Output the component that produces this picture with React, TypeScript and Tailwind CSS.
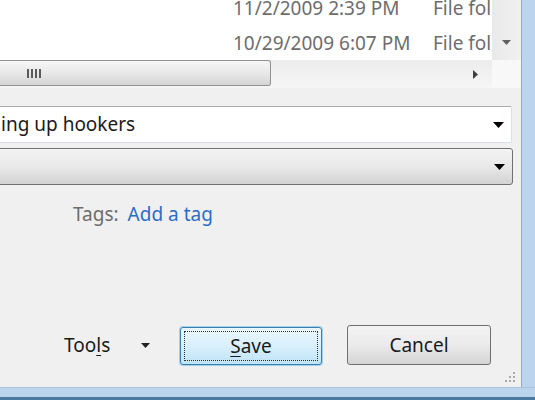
import React from "react";

function Tri({ className = "", fill = "#000", w = 11, h = 6 }: { className?: string; fill?: string; w?: number; h?: number }) {
  return (
    <svg width={w} height={h} viewBox={`0 0 ${w} ${h}`} className={className}>
      <polygon points={`0,0 ${w},0 ${w / 2},${h}`} fill={fill} />
    </svg>
  );
}

function Row({ date }: { date: string }) {
  return (
    <div className="h-[35px] flex items-center whitespace-nowrap leading-none">
      <div className="w-[433px] pl-[233px] shrink-0">{date}</div>
      <div className="shrink-0">File folder</div>
    </div>
  );
}

export default function App() {
  return (
    <div className="w-[535px] h-[400px] overflow-hidden flex flex-col font-['Noto_Sans','Open_Sans',sans-serif] text-[19px] bg-[#f0f0f0]">
      <div className="flex h-[387px]">
        <div className="w-[521px] flex flex-col bg-[#f0f0f0] relative">
          {/* list + vertical scrollbar */}
          <div className="flex h-[60px]">
            <div className="w-[492px] bg-white overflow-hidden text-[#6d6d6d]">
              <div className="-mt-[9px]">
                <Row date="11/2/2009 2:39 PM" />
                <Row date="10/29/2009 6:07 PM" />
              </div>
            </div>
            <div className="flex-1 bg-gradient-to-r from-[#e9e9e9] to-[#f1f1f1] flex items-end justify-center pb-[15px]">
              <Tri w={9} h={5} fill="#606060" />
            </div>
          </div>
          {/* horizontal scrollbar */}
          <div className="flex h-[28px]">
            <div className="w-[492px] bg-gradient-to-b from-[#ececec] to-[#f6f6f6] flex items-start relative">
              <div className="w-[271px] h-[26px] border border-l-0 border-[#929292] rounded-r-[3px] bg-gradient-to-b from-[#f6f6f6] via-[#e8e8e8] to-[#d4d4d4] flex items-center pl-[27px] gap-[2px]">
                <div className="w-[2px] h-[9px] bg-[#5a5a5a]" />
                <div className="w-[2px] h-[9px] bg-[#5a5a5a]" />
                <div className="w-[2px] h-[9px] bg-[#5a5a5a]" />
                <div className="w-[2px] h-[9px] bg-[#5a5a5a]" />
              </div>
              <div className="flex-1 h-full flex items-center justify-end pr-[14px]">
                <svg width="5" height="9" viewBox="0 0 5 9">
                  <polygon points="0,0 5,4.5 0,9" fill="#404040" />
                </svg>
              </div>
            </div>
            <div className="flex-1 bg-[#f8f8f8]" />
          </div>
          {/* body */}
          <div className="flex-1 flex flex-col">
            <div className="mt-[18px] -ml-[4px] w-[516px] h-[37px] bg-white border border-[#dbdfe6] border-t-[#abadb3] rounded-[2px] flex items-center pl-[4px] pr-[7px]">
              <span className="flex-1 text-[#1a1a1a] leading-none">ing up hookers</span>
              <Tri w={11} h={6} fill="#000" />
            </div>
            <div className="mt-[5px] -ml-[4px] w-[517px] h-[37px] border border-[#707070] rounded-[3px] bg-gradient-to-b from-[#f3f3f3] via-[#e9e9e9] to-[#d2d2d2] flex items-center justify-end pr-[7px]">
              <Tri w={11} h={6} fill="#000" />
            </div>
            <div className="mt-[16px] h-[26px] flex items-center pl-[73px] gap-[9px] leading-none">
              <span className="text-[#6d6d6d]">Tags:</span>
              <span className="text-[#2b6dc6]">Add a tag</span>
            </div>
            <div className="mt-auto mb-[22px] flex items-end">
              <div className="w-[180px] pl-[64px] h-[39px] flex items-center text-[#1a1a1a] leading-none">
                <span>
                  Too<span className="underline underline-offset-[3px]">l</span>s
                </span>
                <Tri className="ml-auto mr-[30px]" w={9} h={5} fill="#222" />
              </div>
              <div className="w-[142px] h-[38px] rounded-[3px] border border-[#3c7fb1] shadow-[0_0_0_1px_#9fd0ec] bg-gradient-to-b from-[#eaf6fd] via-[#d9f0fc] to-[#bee3f7] p-[3px]">
                <div className="w-full h-full border border-dotted border-[#303030] flex items-center justify-center leading-none text-[#1a1a1a]">
                  <span>
                    <span className="underline underline-offset-[3px]">S</span>ave
                  </span>
                </div>
              </div>
              <div className="ml-[25px] w-[144px] h-[40px] rounded-[3px] border border-[#707070] bg-gradient-to-b from-[#f2f2f2] via-[#ebebeb] to-[#d4d4d4] flex items-center justify-center leading-none text-[#1a1a1a]">
                Cancel
              </div>
            </div>
          </div>
          {/* resize grip */}
          <div className="absolute left-[503px] top-[372px] w-[14px] h-[12px]">
            <div className="absolute left-[10px] top-[0px] w-[2px] h-[2px] bg-[#a9a9a9]" />
            <div className="absolute left-[6px] top-[4px] w-[2px] h-[2px] bg-[#a9a9a9]" />
            <div className="absolute left-[10px] top-[4px] w-[2px] h-[2px] bg-[#a9a9a9]" />
            <div className="absolute left-[2px] top-[8px] w-[2px] h-[2px] bg-[#a9a9a9]" />
            <div className="absolute left-[6px] top-[8px] w-[2px] h-[2px] bg-[#a9a9a9]" />
            <div className="absolute left-[10px] top-[8px] w-[2px] h-[2px] bg-[#a9a9a9]" />
          </div>
        </div>
        <div className="flex-1 border-l border-[#8eabcb] bg-[#bdd4ed]" />
      </div>
      <div className="h-[13px] flex flex-col bg-[#bdd4ed] border-t border-[#a9c3df]">
        <div className="flex-1" />
        <div className="h-[3px] bg-[#4a7aa2]" />
      </div>
    </div>
  );
}
